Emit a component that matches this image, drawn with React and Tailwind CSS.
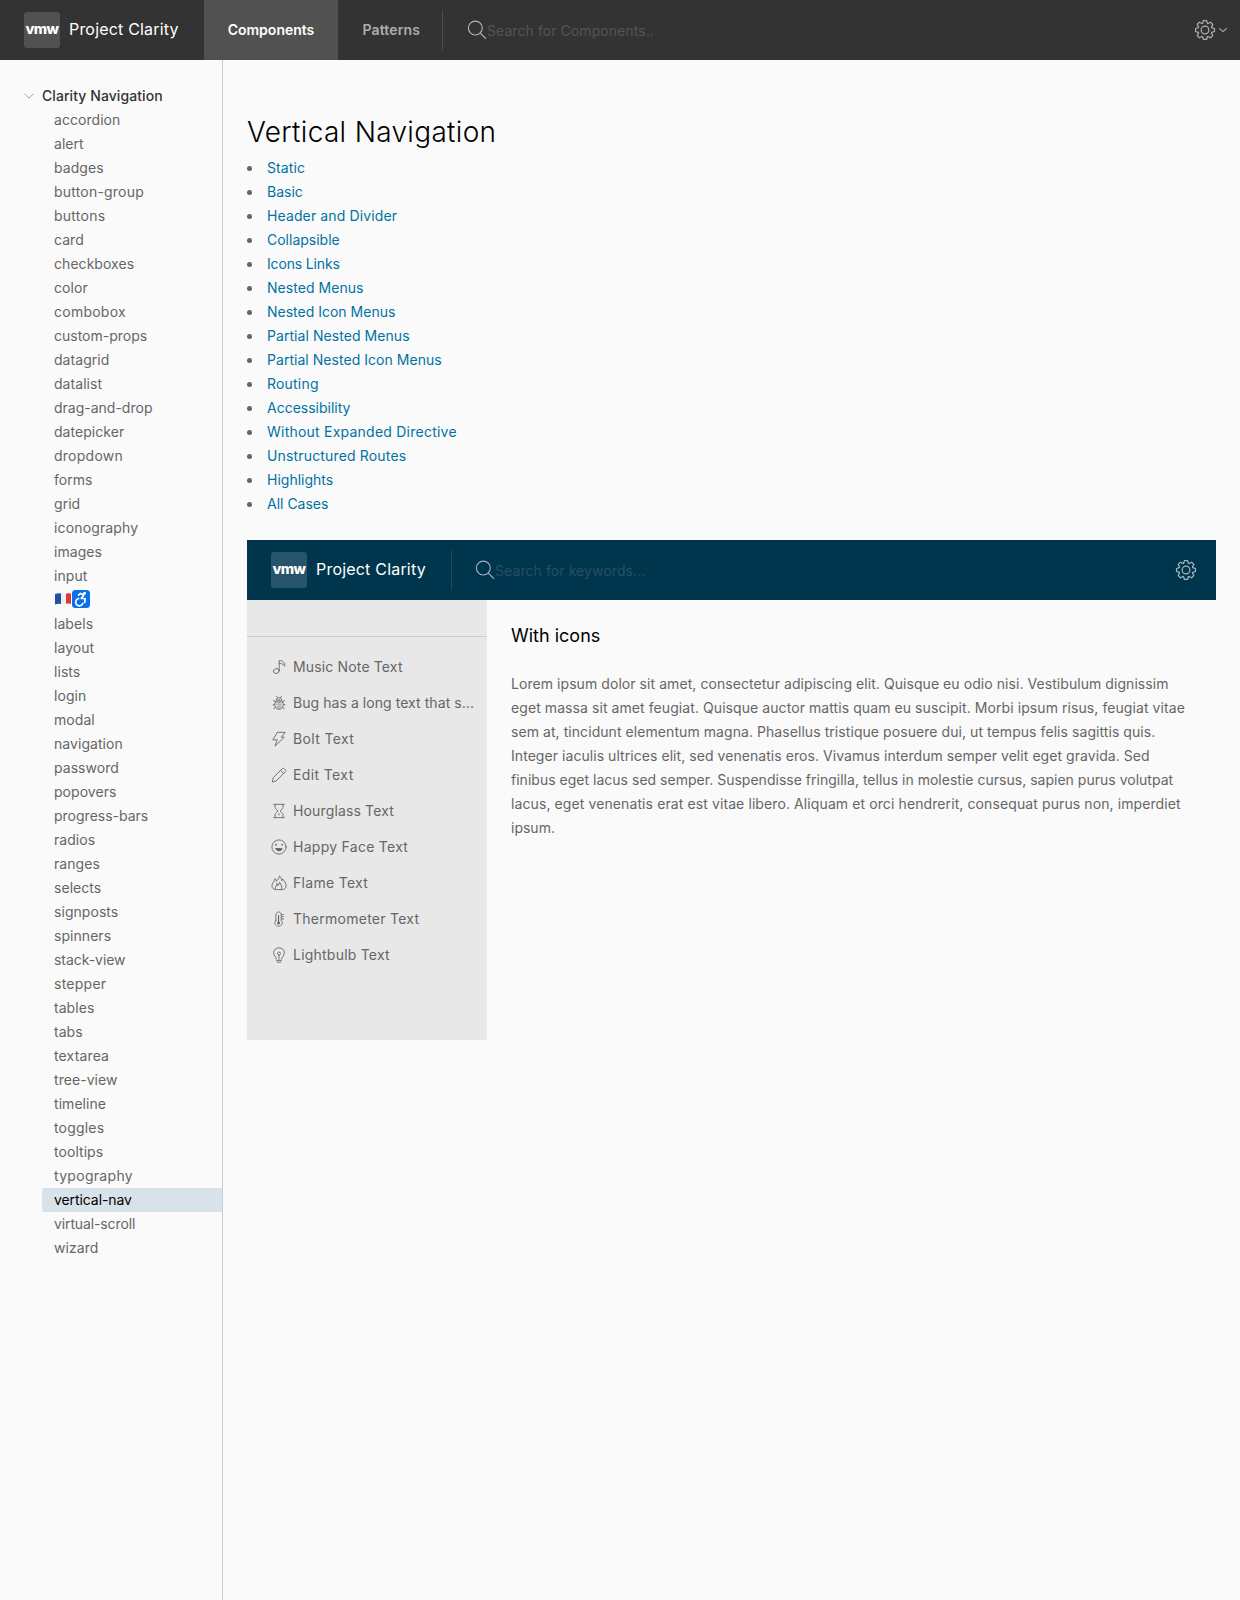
import React from "react";

const NAV = [
  "accordion", "alert", "badges", "button-group", "buttons", "card", "checkboxes", "color", "combobox",
  "custom-props", "datagrid", "datalist", "drag-and-drop", "datepicker", "dropdown", "forms", "grid",
  "iconography", "images", "input", "i18n-a11y", "labels", "layout", "lists", "login", "modal", "navigation",
  "password", "popovers", "progress-bars", "radios", "ranges", "selects", "signposts", "spinners",
  "stack-view", "stepper", "tables", "tabs", "textarea", "tree-view", "timeline", "toggles", "tooltips",
  "typography", "vertical-nav", "virtual-scroll", "wizard",
];

const NAV_TRACKING = {
  "vertical-nav": "tracking-[-0.08px]",
  "virtual-scroll": "tracking-[-0.12px]",
  "stack-view": "tracking-[-0.05px]",
  "drag-and-drop": "tracking-[0px]",
  "progress-bars": "tracking-[0px]",
  "custom-props": "tracking-[0px]",
  "button-group": "tracking-[0.2px]",
  combobox: "tracking-[0.25px]",
  iconography: "tracking-[0.15px]",
  dropdown: "tracking-[0.25px]",
  buttons: "tracking-[0.25px]",
  typography: "tracking-[0.3px]",
  stepper: "tracking-[0.25px]",
  toggles: "tracking-[0.18px]",
  textarea: "tracking-[0.15px]",
};

const LINKS = [
  ["Static", "tracking-[0.1px]"],
  ["Basic", ""],
  ["Header and Divider", "tracking-[0.12px]"],
  ["Collapsible", ""],
  ["Icons Links", "tracking-[-0.15px]"],
  ["Nested Menus", "tracking-[0.05px]"],
  ["Nested Icon Menus", ""],
  ["Partial Nested Menus", "tracking-[0.06px]"],
  ["Partial Nested Icon Menus", "tracking-[0.04px]"],
  ["Routing", "tracking-[0.2px]"],
  ["Accessibility", ""],
  ["Without Expanded Directive", "tracking-[0.23px]"],
  ["Unstructured Routes", "tracking-[0.16px]"],
  ["Highlights", ""],
  ["All Cases", ""],
];

const LINES = [
  ["Lorem ipsum dolor sit amet, consectetur adipiscing elit. Quisque eu odio nisi. Vestibulum dignissim", "tracking-[0.062px]"],
  ["eget massa sit amet feugiat. Quisque auctor mattis quam eu suscipit. Morbi ipsum risus, feugiat vitae", "tracking-[0.075px]"],
  ["sem at, tincidunt elementum magna. Phasellus tristique posuere dui, ut tempus felis sagittis quis.", "tracking-[0.065px]"],
  ["Integer iaculis ultrices elit, sed venenatis eros. Vivamus interdum semper velit eget gravida. Sed", "tracking-[0.055px]"],
  ["finibus eget lacus sed semper. Suspendisse fringilla, tellus in molestie cursus, sapien purus volutpat", "tracking-[0.015px]"],
  ["lacus, eget venenatis erat est vitae libero. Aliquam et orci hendrerit, consequat purus non, imperdiet", "tracking-[0.1px]"],
  ["ipsum.", ""],
];

function Svg({ children, className, width = 2 }) {
  return (
    <svg viewBox="0 0 36 36" className={className} fill="none" stroke="currentColor" strokeWidth={width} strokeLinecap="round" strokeLinejoin="round">
      {children}
    </svg>
  );
}

const MusicNote = (
  <>
    <ellipse cx="12" cy="27" rx="6.500" ry="5.500" transform="rotate(-20 12 27)" />
    <path d="M18.500 26V3.500c4.500 0 7.500 1 9.500 3 3 2.500 4 5.500 2.500 9M18.500 9.500c4.500 0 8.500 1.500 12 6" />
  </>
);
const Bug = (
  <>
    <path d="M18 11c-6 0-9.500 4.500-9.500 10.500S12 32 18 32s9.500-4.500 9.500-10.500S24 11 18 11zM10 15.500h16M11.500 11c1-4 4-5 6.500-5s5.500 1 6.500 5M12 3l3 3M24 3l-3 3M8 22H4.500M28 22h3.500M9 15l-3.500-3M27 15l3.500-3M10 28l-4 3M26 28l4 3" />
    <path d="M18 16v15" strokeWidth="1.500" />
    <path d="M13.500 20.500v.500M22.500 20.500v.500M14 26v.500M22 26v.500" strokeWidth="2.500" />
  </>
);
const Bolt = <path d="M15 3h17l-9 11h7L9 34l5-14H5z" />;
const Edit = <path d="M3 33l2-9L25 4c1.500-1.500 3.500-1.500 5 0l2 2c1.500 1.500 1.500 3.500 0 5L12 31zM21.500 7.500l7 7" />;
const Hourglass = <path d="M6 3h24M6 33h24M9 3v7c0 3.500 6 5 6 8s-6 4.500-6 8v7M27 3v7c0 3.500-6 5-6 8s6 4.500 6 8v7M18 24v3" />;
const Happy = (
  <>
    <circle cx="18" cy="18" r="16" />
    <circle cx="11" cy="13" r="1" fill="currentColor" />
    <circle cx="25" cy="13" r="1" fill="currentColor" />
    <path d="M11 21.500h14c0 7-14 7-14 0z" fill="currentColor" />
  </>
);
const Flame = (
  <>
    <path d="M11 33C5 33 2 29 2 24c0-6 6-9 7-16 2 2 3 4 3 6 3-3 7-6 7-12 4 3 5 7 5 11 1-1 2-2 2-4 4 4 8 10 8 15 0 6-4 9-8 9z" />
    <path d="M10 32c-2-5 3-7 3-13 2 1 2 3 2 5 3-2 4-5 4-8 4 5 6 11 5 16" />
  </>
);
const Thermometer = (
  <>
    <path d="M11 22V9c0-9 12-9 12 0v13c6 5 1 12-6 12s-12-7-6-12zM28 8h-4M28 13h-4M28 18h-4" />
    <path d="M17 10v16" strokeWidth="2.500" />
    <circle cx="17" cy="27" r="2.500" fill="currentColor" />
  </>
);
const Bulb = (
  <path d="M12 27c0-5-6-7-6-14C6 6 11 2 18 2s12 4 12 11c0 7-6 9-6 14M12 30h12M14 34h8M18 27v-8l-4-5 4-3 4 3-4 5" />
);

const ITEMS = [
  ["Music Note Text", MusicNote, "tracking-[0.15px]"],
  ["Bug has a long text that s...", Bug, "tracking-[0.06px]"],
  ["Bolt Text", Bolt, "tracking-[0.35px]"],
  ["Edit Text", Edit, "tracking-[0.38px]"],
  ["Hourglass Text", Hourglass, "tracking-[0.14px]"],
  ["Happy Face Text", Happy, "tracking-[0.27px]"],
  ["Flame Text", Flame, "tracking-[0.3px]"],
  ["Thermometer Text", Thermometer, "tracking-[0.26px]"],
  ["Lightbulb Text", Bulb, "tracking-[0.22px]"],
];

function Cog({ className }) {
  return (
    <Svg className={className}>
      <circle cx="18" cy="18" r="6.300" />
      {[0, 45, 90, 135, 180, 225, 270, 315].map((a) => (
        <path key={a} transform={`rotate(${a} 18 18)`} d="M14 7l1.500-4.500h5L22 7L23 7.500" />
      ))}
    </Svg>
  );
}

function Search({ className }) {
  return (
    <Svg className={className}>
      <circle cx="15" cy="14.500" r="12.500" />
      <path d="M24.500 24l9 9" />
    </Svg>
  );
}

function Logo({ className }) {
  return (
    <span className={`flex h-9 w-9 shrink-0 items-center justify-center rounded-[3px] pb-0.5 text-[14.5px] font-extrabold leading-none tracking-[-0.6px] text-white ${className}`}>
      vmw
    </span>
  );
}

function Emoji() {
  return (
    <span className="flex h-6 items-start pt-px">
      <svg viewBox="0 0 36 20" className="h-5 w-9">
        <path d="M1 5q3-1 6-.500v10.500q-3-.500-6 .500z" fill="#21529c" />
        <path d="M7 4.500q2 .500 5 0v10.300q-3 .700-5 .200z" fill="#eee" />
        <path d="M12 4.500q3-.700 5 0v10.500q-2-.800-5-.200z" fill="#dc3a36" />
        <rect x="18" y="1" width="18" height="18" rx="3.500" fill="#0b6fea" />
        <g fill="none" stroke="#fff" strokeWidth="1.700" strokeLinecap="round" strokeLinejoin="round">
          <path d="M24.500 6.200l2-1.800 3.200 1.600-2.500 3.500h4l-.500 4" />
          <path d="M24.600 9.500a3.700 3.700 0 1 0 4.200 5" />
        </g>
        <circle cx="30.500" cy="4.300" r="1.500" fill="#fff" />
      </svg>
    </span>
  );
}

export default function App() {
  return (
    <div className="flex h-[1600px] w-[1240px] flex-col overflow-hidden bg-[#fafafa] font-['Inter',sans-serif] text-sm leading-6 text-[#666]">
      <header className="flex h-[60px] shrink-0 items-center bg-[#333] pl-6 text-white">
        <Logo className="bg-[#515151]" />
        <span className="ml-[9px] w-[135px] whitespace-nowrap pb-0.5 text-base tracking-[0.19px]">Project Clarity</span>
        <a className="flex h-full w-[134px] items-center justify-center bg-[#515151] font-semibold">Components</a>
        <a className="flex h-full w-[104px] items-center justify-end pr-[22px] font-semibold tracking-[0.12px] text-[#adadad]">Patterns</a>
        <span className="h-10 w-px bg-[#4c4c4c]" />
        <Search className="ml-6 h-5 w-5 text-[#b5b5b5]" />
        <span className="mt-px tracking-[0.07px] text-[#545454]">Search for Components..</span>
        <Cog className="ml-auto h-[22px] w-[22px] text-[#adadad]" />
        <Svg className="ml-[3px] mr-[13px] h-2 w-2 text-[#adadad]" width={5}>
          <path d="M3 12l15 13 15-13" />
        </Svg>
      </header>

      <div className="flex min-h-0 flex-1">
        <nav className="w-[223px] shrink-0 border-r border-[#ccc] pt-6">
          <div className="flex h-6 items-center font-medium text-[#333]">
            <Svg className="ml-6 mr-[8px] h-2.5 w-2.5 text-[#8c8c8c]" width={3}>
              <path d="M3 11l15 15 15-15" />
            </Svg>
            <span className="tracking-[0.07px]">Clarity Navigation</span>
          </div>
          {NAV.map((n) => (
            <a
              key={n}
              className={`ml-[42px] block h-6 rounded-l-[3px] pl-3 ${NAV_TRACKING[n] || "tracking-[0.05px]"} ${n === "vertical-nav" ? "bg-[#d8e3e9] text-black" : ""}`}
            >
              {n === "i18n-a11y" ? <Emoji /> : n}
            </a>
          ))}
        </nav>

        <main className="flex-1 pl-6 pr-6 pt-12">
          <h1 className="h-12 text-[28px] font-light leading-[48px] tracking-[0.32px] text-black">Vertical Navigation</h1>
          <ul>
            {LINKS.map(([l, tracking]) => (
              <li key={l} className="flex h-6 items-center">
                <span className="mr-[15px] h-[5px] w-[5px] rounded-full bg-[#666]" />
                <a className={`text-[#0072a3] ${tracking}`}>{l}</a>
              </li>
            ))}
          </ul>

          <section className="mt-6 w-[969px]">
            <div className="flex h-[60px] items-center bg-[#00364d] pl-6 text-white">
              <Logo className="bg-[#26546a]" />
              <span className="ml-[9px] w-[135px] whitespace-nowrap pb-0.5 text-base tracking-[0.2px]">Project Clarity</span>
              <span className="h-10 w-px bg-[#1c4c61]" />
              <Search className="ml-[23px] h-5 w-5 text-[#a3b5be]" />
              <span className="mt-[2px] tracking-[0.08px] text-[#264f62]">Search for keywords...</span>
              <Cog className="ml-auto mr-[19px] h-[22px] w-[22px] text-[#a3b5be]" />
            </div>
            <div className="flex">
              <div className="h-[440px] w-60 shrink-0 bg-[#e8e8e8]">
                <div className="h-[37px] border-b border-[#ccc]" />
                <div className="pt-3">
                  {ITEMS.map(([t, icon, tracking]) => (
                    <div key={t} className="flex h-9 items-center pl-6">
                      <Svg className="mr-[6px] h-4 w-4 shrink-0">{icon}</Svg>
                      <span className={`whitespace-nowrap ${tracking}`}>{t}</span>
                    </div>
                  ))}
                </div>
              </div>
              <div className="pl-6 pt-6">
                <h2 className="text-lg leading-6 text-black">With icons</h2>
                <p className="mt-6 whitespace-nowrap">
                  {LINES.map(([l, tracking]) => (
                    <span key={l} className={`block ${tracking}`}>{l}</span>
                  ))}
                </p>
              </div>
            </div>
          </section>
        </main>
      </div>
    </div>
  );
}
